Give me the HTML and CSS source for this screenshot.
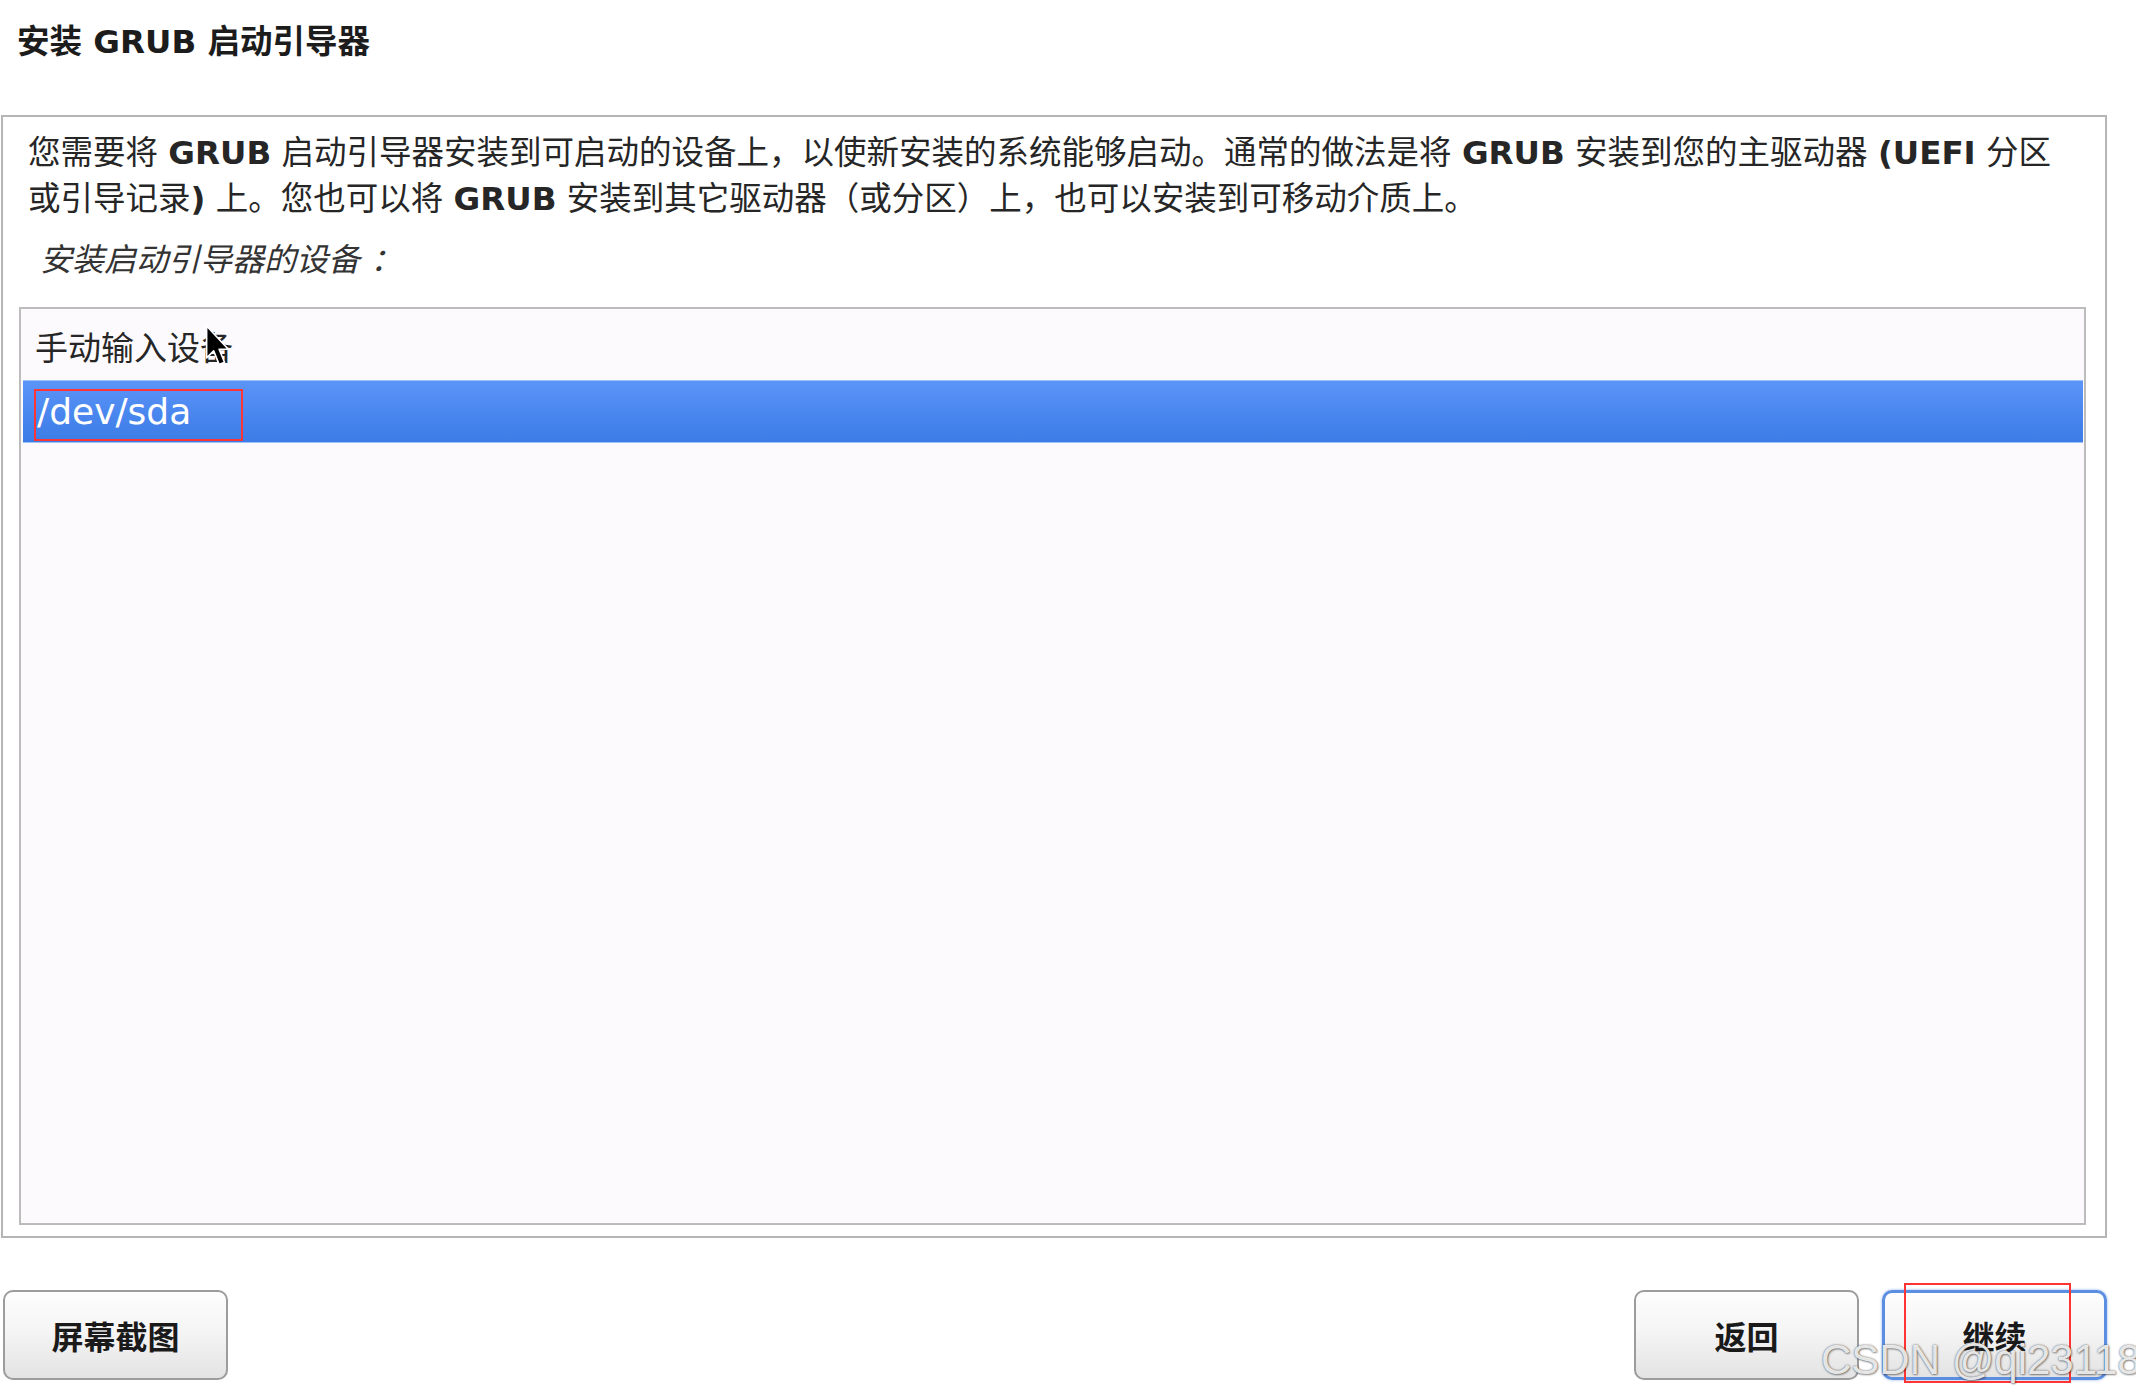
FILE: index.html
```html
<!DOCTYPE html>
<html>
<head>
    <meta charset="utf-8">
    <title>安装 GRUB 启动引导器</title>
    <link rel="stylesheet" href="styles.css">
</head>
<body>
    <div class="page">
        <h1>安装 <b>GRUB</b> 启动引导器</h1>

        <div class="frame">
            <p class="intro">您需要将 <b>GRUB</b> 启动引导器安装到可启动的设备上，以使新安装的系统能够启动。通常的做法是将 <b>GRUB</b> 安装到您的主驱动器 <b>(UEFI</b> 分区<br>或引导记录<b>)</b> 上。您也可以将 <b>GRUB</b> 安装到其它驱动器（或分区）上，也可以安装到可移动介质上。</p>
            <div class="label">安装启动引导器的设备 ：</div>

            <div class="listbox">
                <div class="row">手动输入设备</div>
                <div class="row selected">/dev/sda</div>
            </div>
        </div>

        <div class="buttons">
            <button class="btn">屏幕截图</button>
            <button class="btn push-right">返回</button>
            <button class="btn focused">继续</button>
        </div>
    </div>

    <!-- annotations on top of the screenshot -->
    <div class="mark mark-dev"></div>
    <div class="mark mark-next"></div>

    <svg class="cursor" width="26" height="44" viewBox="0 0 24 40">
        <path d="M1.5 1.5 L1.5 31 L8 24.5 L13 37 L18 35 L13 23 L21.5 23 Z" fill="#000" stroke="#fff" stroke-width="1.5" stroke-linejoin="round"/>
    </svg>

    <div class="watermark">CSDN @qi23118</div>
</body>
</html>
```

FILE: styles.css
```css
body {
    margin: 0;
    background-color: #fff;
    color: #222;
    font-family: "DejaVu Sans", "Noto Sans CJK SC", sans-serif;
    overflow: hidden;
    position: relative;
    height: 1397px;
}

.page {
    padding: 0 29px 0 1px;
}

h1 {
    margin: 0 0 53px 0;
    padding: 22px 0 0 16px;
    font-size: 32.5px;
    line-height: 40px;
    font-weight: bold;
    color: #1c1c1c;
}

.frame {
    border: 2px solid #b5b5b5;
    padding: 13px 19px 11px 16px;
    background-color: #fff;
}

.intro {
    margin: 0;
    padding-left: 9px;
    font-size: 32.5px;
    line-height: 46px;
    color: #262626;
    white-space: nowrap;
}

.intro b {
    font-weight: bold;
}

.label {
    margin-top: 15px;
    padding-left: 21px;
    font-size: 32px;
    line-height: 46px;
    font-style: italic;
    color: #333;
}

.listbox {
    margin-top: 24px;
    height: 918px;
    box-sizing: border-box;
    border: 2px solid #bcbcbc;
    background-color: #fdfafd;
    padding: 8px 1px 0 2px;
}

.row {
    height: 63px;
    line-height: 63px;
    padding-left: 12px;
    font-size: 33px;
    color: #262626;
}

.row.selected {
    height: 61px;
    line-height: 61px;
    padding-left: 14px;
    font-size: 36px;
    color: #fff;
    border-top: 1px solid #9fc1fa;
    border-bottom: 1px solid #9fc1fa;
    background: linear-gradient(#5c95f8, #4a87ef 50%, #3d7be6);
}

.buttons {
    display: flex;
    gap: 23px;
    margin-top: 52px;
    padding-left: 2px;
}

.btn {
    width: 225px;
    height: 90px;
    border: 2px solid #9c9c9c;
    border-radius: 10px;
    background: linear-gradient(#fefdfe, #f6f5f6 45%, #e4e3e4);
    font-family: "DejaVu Sans", "Noto Sans CJK SC", sans-serif;
    font-size: 32px;
    font-weight: bold;
    color: #1a1a1a;
    padding: 0;
}

.push-right {
    margin-left: auto;
}

.btn.focused {
    border: 3px solid #5b8ee0;
    box-shadow: 0 0 3px #8fb4ee;
}

.mark {
    position: absolute;
    border: 2px solid #ff3535;
}

.mark-dev {
    left: 34px;
    top: 389px;
    width: 205px;
    height: 48px;
}

.mark-next {
    left: 1904px;
    top: 1283px;
    width: 163px;
    height: 96px;
}

.cursor {
    position: absolute;
    left: 205px;
    top: 324px;
}

.watermark {
    position: absolute;
    left: 1821px;
    top: 1336px;
    font-family: "Liberation Sans", Arial, sans-serif;
    font-size: 42px;
    color: rgba(255, 255, 255, 0.85);
    text-shadow: 0 0 2px rgba(70, 70, 70, 0.9), 1px 1px 2px rgba(0, 0, 0, 0.35);
    white-space: nowrap;
}
```
